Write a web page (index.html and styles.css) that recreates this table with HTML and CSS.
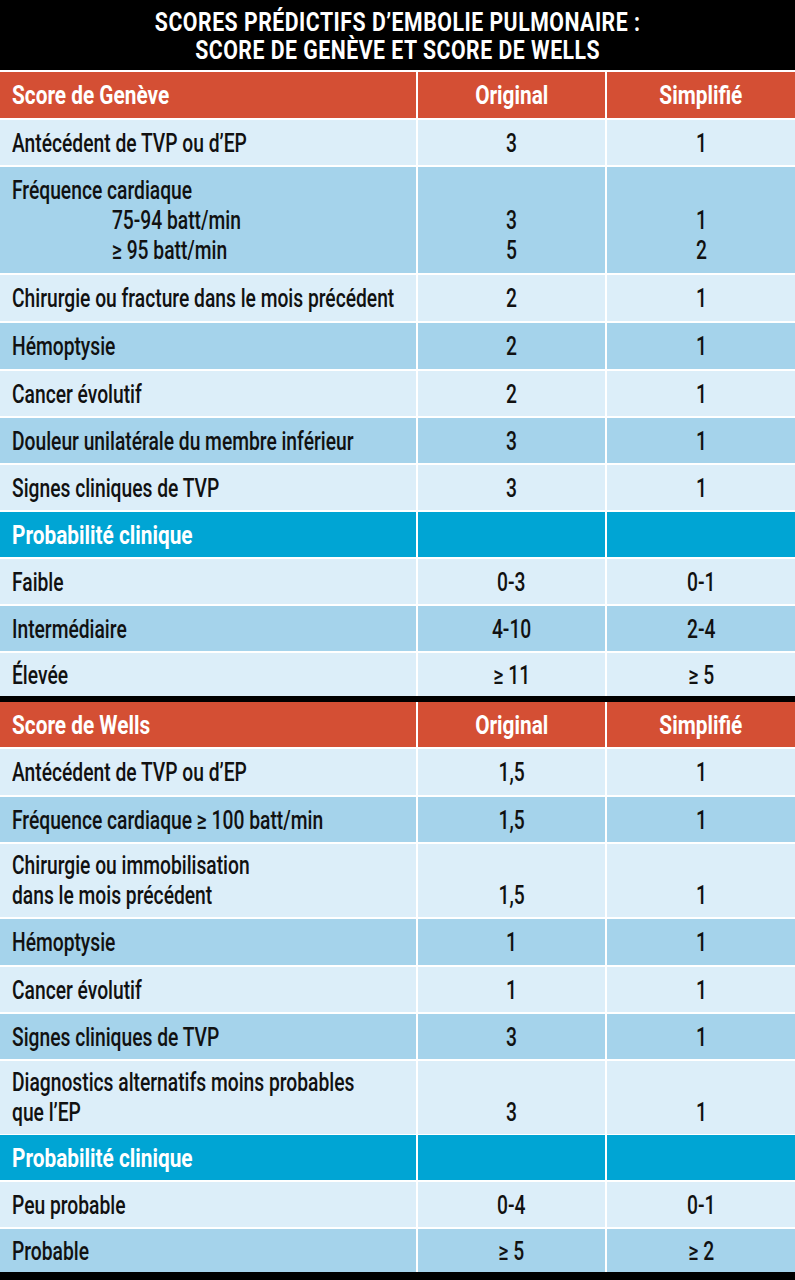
FILE: index.html
```html
<!DOCTYPE html>
<html lang="fr">
<head>
<meta charset="utf-8">
<title>Scores prédictifs d'embolie pulmonaire</title>
<link rel="stylesheet" href="styles.css">
</head>
<body>
<div class="sheet">
  <div class="title"><span class="t">SCORES PRÉDICTIFS D’EMBOLIE PULMONAIRE :<br>SCORE DE GENÈVE ET SCORE DE WELLS</span></div>

  <div class="grid">
    <div class="cell head h46"><span class="t">Score de Genève</span></div><div class="cell head c h46"><span class="t">Original</span></div><div class="cell head c h46"><span class="t">Simplifié</span></div>

    <div class="cell"><span class="t">Antécédent de TVP ou d’EP</span></div><div class="cell c"><span class="t">3</span></div><div class="cell c"><span class="t">1</span></div>

    <div class="cell dark tall3"><span class="t">Fréquence cardiaque<br><span class="ind">75-94 batt/min</span><br><span class="ind">≥ 95 batt/min</span></span></div>
    <div class="cell dark c tall3"><span class="t"><br>3<br>5</span></div>
    <div class="cell dark c tall3"><span class="t"><br>1<br>2</span></div>

    <div class="cell h46"><span class="t">Chirurgie ou fracture dans le mois précédent</span></div><div class="cell c h46"><span class="t">2</span></div><div class="cell c h46"><span class="t">1</span></div>
    <div class="cell dark h46"><span class="t">Hémoptysie</span></div><div class="cell dark c h46"><span class="t">2</span></div><div class="cell dark c h46"><span class="t">1</span></div>
    <div class="cell"><span class="t">Cancer évolutif</span></div><div class="cell c"><span class="t">2</span></div><div class="cell c"><span class="t">1</span></div>
    <div class="cell dark"><span class="t">Douleur unilatérale du membre inférieur</span></div><div class="cell dark c"><span class="t">3</span></div><div class="cell dark c"><span class="t">1</span></div>
    <div class="cell"><span class="t">Signes cliniques de TVP</span></div><div class="cell c"><span class="t">3</span></div><div class="cell c"><span class="t">1</span></div>

    <div class="cell prob"><span class="t">Probabilité clinique</span></div><div class="cell prob"></div><div class="cell prob"></div>
    <div class="cell"><span class="t">Faible</span></div><div class="cell c"><span class="t">0-3</span></div><div class="cell c"><span class="t">0-1</span></div>
    <div class="cell dark"><span class="t">Intermédiaire</span></div><div class="cell dark c"><span class="t">4-10</span></div><div class="cell dark c"><span class="t">2-4</span></div>
    <div class="cell last"><span class="t">Élevée</span></div><div class="cell c last"><span class="t">≥ 11</span></div><div class="cell c last"><span class="t">≥ 5</span></div>
  </div>

  <div class="divider"></div>

  <div class="grid">
    <div class="cell head"><span class="t">Score de Wells</span></div><div class="cell head c"><span class="t">Original</span></div><div class="cell head c"><span class="t">Simplifié</span></div>
    <div class="cell h46"><span class="t">Antécédent de TVP ou d’EP</span></div><div class="cell c h46"><span class="t">1,5</span></div><div class="cell c h46"><span class="t">1</span></div>
    <div class="cell dark"><span class="t">Fréquence cardiaque ≥ 100 batt/min</span></div><div class="cell dark c"><span class="t">1,5</span></div><div class="cell dark c"><span class="t">1</span></div>
    <div class="cell tall2"><span class="t">Chirurgie ou immobilisation<br>dans le mois précédent</span></div><div class="cell c tall2"><span class="t"><br>1,5</span></div><div class="cell c tall2"><span class="t"><br>1</span></div>
    <div class="cell dark h46"><span class="t">Hémoptysie</span></div><div class="cell dark c h46"><span class="t">1</span></div><div class="cell dark c h46"><span class="t">1</span></div>
    <div class="cell"><span class="t">Cancer évolutif</span></div><div class="cell c"><span class="t">1</span></div><div class="cell c"><span class="t">1</span></div>
    <div class="cell dark"><span class="t">Signes cliniques de TVP</span></div><div class="cell dark c"><span class="t">3</span></div><div class="cell dark c"><span class="t">1</span></div>
    <div class="cell tall2 gap1"><span class="t">Diagnostics alternatifs moins probables<br>que l’EP</span></div><div class="cell c tall2 gap1"><span class="t"><br>3</span></div><div class="cell c tall2 gap1"><span class="t"><br>1</span></div>

    <div class="cell prob"><span class="t">Probabilité clinique</span></div><div class="cell prob"></div><div class="cell prob"></div>
    <div class="cell"><span class="t">Peu probable</span></div><div class="cell c"><span class="t">0-4</span></div><div class="cell c"><span class="t">0-1</span></div>
    <div class="cell dark last"><span class="t">Probable</span></div><div class="cell dark c last"><span class="t">≥ 5</span></div><div class="cell dark c last"><span class="t">≥ 2</span></div>
  </div>
  <div class="bottom"></div>
</div>
</body>
</html>
```

FILE: styles.css
```css
html, body {
  margin: 0;
  padding: 0;
  background: #ffffff;
}

.sheet {
  width: 795px;
  height: 1280px;
  overflow: hidden;
  font-family: Roboto, "Liberation Sans", sans-serif;
  color: #111111;
  display: flex;
  flex-direction: column;
}

/* condensed text: the reference face is a narrow grotesque */
.t {
  display: inline-block;
  white-space: nowrap;
  transform: scaleX(0.74);
  transform-origin: left center;
}

.head .t,
.prob .t {
  transform: scaleX(0.8);
}

.c .t {
  transform-origin: center center;
}

.title .t {
  transform: scaleX(0.85);
  transform-origin: center center;
}

.title {
  background: #000000;
  color: #ffffff;
  font-weight: bold;
  font-size: 25px;
  line-height: 28px;
  letter-spacing: 0.6px;
  text-align: center;
  height: 72px;
  box-sizing: border-box;
  padding-top: 9px;
  border-bottom: 2px solid #ffffff;
}

.grid {
  display: grid;
  grid-template-columns: 416px 187px 1fr;
  column-gap: 2px;
  row-gap: 2px;
  background: #ffffff;
}

.cell {
  background: #dceef9;
  font-size: 26px;
  font-weight: 500;
  line-height: 30px;
  padding: 8px 12px 7px;
  height: 30px;
}

.cell.c {
  text-align: center;
  padding-left: 0;
  padding-right: 0;
}

.cell.dark {
  background: #a5d3eb;
}

.cell.head {
  background: #d44f34;
  color: #ffffff;
  font-weight: bold;
}

.cell.prob {
  background: #00a5d4;
  color: #ffffff;
  font-weight: bold;
}

.cell.h46 {
  padding-bottom: 8px;
}

.cell.tall3 {
  height: 90px;
  padding-top: 8px;
  padding-bottom: 8px;
}

.cell.tall2 {
  height: 60px;
  padding-top: 6px;
  padding-bottom: 7px;
}

.cell.gap1 {
  margin-bottom: -1px;
}

.cell.last {
  padding-top: 7px;
  padding-bottom: 6px;
}

.ind {
  padding-left: 135px;
}

.divider {
  height: 6px;
  background: #000000;
}

.bottom {
  flex: 1;
  background: #000000;
}
```
